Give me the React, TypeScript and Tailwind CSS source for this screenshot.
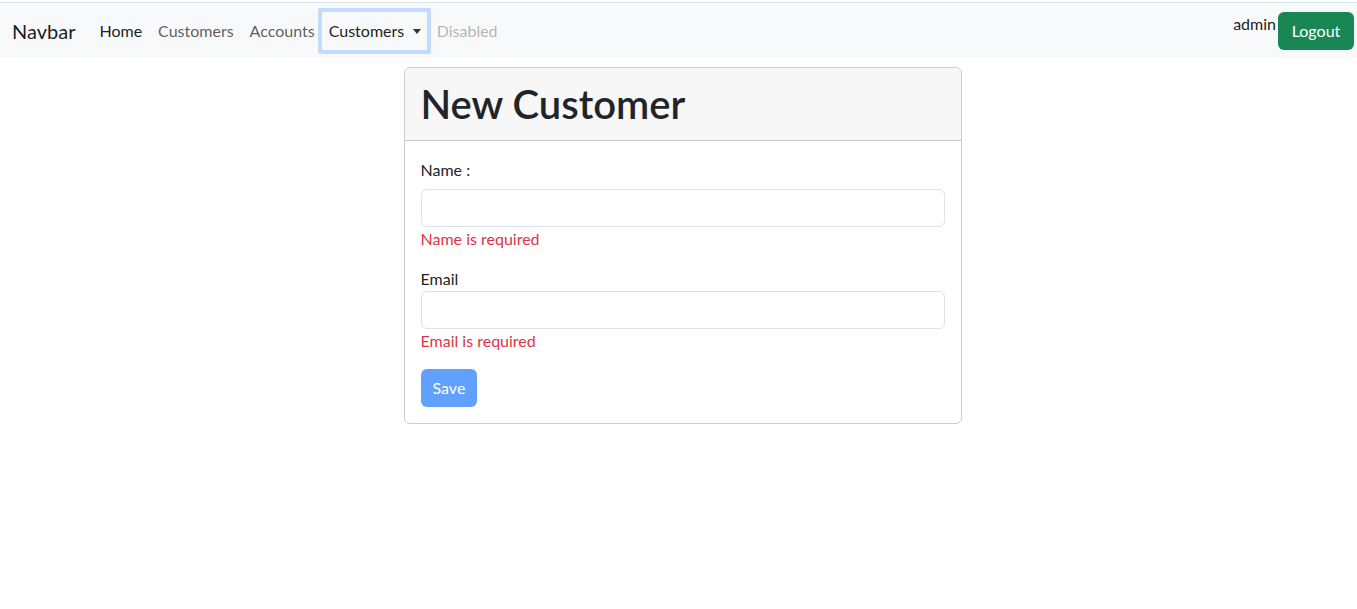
import React from "react";

const font = { fontFamily: "Lato, 'Noto Sans', sans-serif" };

function NavLink({ children, active, disabled }: { children: React.ReactNode; active?: boolean; disabled?: boolean }) {
  return (
    <a
      href="#"
      className={
        "px-2 py-2 text-base leading-6 " +
        (active ? "text-black/90" : disabled ? "text-black/30" : "text-black/65")
      }
    >
      {children}
    </a>
  );
}

export default function App() {
  return (
    <div className="min-h-[609px] bg-white text-[#212529]" style={font}>
      <div className="pt-[2px]">
        <nav className="flex h-[56px] items-center border-t border-[#d5e9ea] bg-[#f8f9fa] pl-3 pr-[3px]">
          <a href="#" className="mr-4 text-xl leading-[30px] text-black/90">
            Navbar
          </a>
          <div className="flex items-center">
            <NavLink active>Home</NavLink>
            <NavLink>Customers</NavLink>
            <NavLink>Accounts</NavLink>
            <button className="ml-[-5px] mr-[-2px] flex h-[46px] w-[113px] shrink-0 items-center gap-[9px] rounded-[2px] border-4 border-[#c1dafd] pl-[7px] text-base text-black/90">
              Customers
              <span className="mt-[2px] block h-0 w-0 border-x-[4px] border-t-[5px] border-x-transparent border-t-black/80" />
            </button>
            <NavLink disabled>Disabled</NavLink>
          </div>
          <div className="ml-auto flex items-start">
            <span className="mr-[2px] mt-0 text-base leading-6 text-black/90">admin</span>
            <button className="h-[38px] w-[76px] rounded-md bg-[#198754] text-base text-white">Logout</button>
          </div>
        </nav>
      </div>

      <div className="flex justify-center pl-2 pt-[9px]">
        <div className="w-[558px] rounded-md border border-black/20">
          <div className="rounded-t-md border-b border-black/20 bg-[#f7f7f7] px-4 py-[9px]">
            <h1 className="text-[40px] font-semibold leading-[54px] text-[#212529]">New Customer</h1>
          </div>
          <div className="px-4 pb-4 pt-[17px]">
            <label className="block text-base leading-6">Name :</label>
            <input className="mt-[7px] block h-[38px] w-full rounded-md border border-[#dee2e6] px-3" />
            <div className="text-base leading-6 text-[#dc3545]">Name is required</div>
            <label className="mt-4 block text-base leading-6">Email</label>
            <input className="block h-[38px] w-full rounded-md border border-[#dee2e6] px-3" />
            <div className="text-base leading-6 text-[#dc3545]">Email is required</div>
            <button className="mt-4 h-[38px] rounded-md bg-[#62a0fe] px-3 text-base text-white">Save</button>
          </div>
        </div>
      </div>
    </div>
  );
}
